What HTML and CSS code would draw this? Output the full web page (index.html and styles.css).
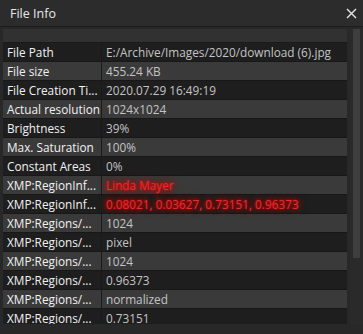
FILE: index.html
```html
<!DOCTYPE html>
<html lang="en">
<head>
    <meta charset="UTF-8">
    <title>File Info</title>
    <link rel="stylesheet" href="styles.css">
</head>
<body>
    <div class="window">
        <div class="titlebar">
            <span class="title">File Info</span>
            <svg class="close" width="11" height="11" viewBox="0 0 11 11">
                <path d="M1 1L10 10M10 1L1 10" stroke="#e6e6e6" stroke-width="1.4"/>
            </svg>
        </div>
        <div class="content">
            <div class="table">
                <div class="head"></div>
                <div class="row"><div class="key">File Path</div><div class="val">E:/Archive/Images/2020/download (6).jpg</div></div>
                <div class="row"><div class="key">File size</div><div class="val">455.24 KB</div></div>
                <div class="row"><div class="key">File Creation Ti...</div><div class="val">2020.07.29 16:49:19</div></div>
                <div class="row"><div class="key">Actual resolution</div><div class="val">1024x1024</div></div>
                <div class="row"><div class="key">Brightness</div><div class="val">39%</div></div>
                <div class="row"><div class="key">Max. Saturation</div><div class="val">100%</div></div>
                <div class="row"><div class="key">Constant Areas</div><div class="val">0%</div></div>
                <div class="row"><div class="key">XMP:RegionInf...</div><div class="val alert">Linda Mayer</div></div>
                <div class="row"><div class="key">XMP:RegionInf...</div><div class="val alert">0.08021, 0.03627, 0.73151, 0.96373</div></div>
                <div class="row"><div class="key">XMP:Regions/...</div><div class="val">1024</div></div>
                <div class="row"><div class="key">XMP:Regions/...</div><div class="val">pixel</div></div>
                <div class="row"><div class="key">XMP:Regions/...</div><div class="val">1024</div></div>
                <div class="row"><div class="key">XMP:Regions/...</div><div class="val">0.96373</div></div>
                <div class="row"><div class="key">XMP:Regions/...</div><div class="val">normalized</div></div>
                <div class="row"><div class="key">XMP:Regions/...</div><div class="val">0.73151</div></div>
            </div>
            <div class="scrollbar"><div class="thumb"></div></div>
        </div>
    </div>
</body>
</html>
```

FILE: styles.css
```css
body {
    margin: 0;
    background-color: #282828;
    font-family: "Open Sans", "Noto Sans", sans-serif;
    font-size: 11.8px;
}

.window {
    width: 363px;
    height: 334px;
    display: flex;
    flex-direction: column;
    overflow: hidden;
}

.titlebar {
    height: 26px;
    flex-shrink: 0;
    background-color: #2c2c2c;
    border-bottom: 1px solid #1c1c1c;
    display: flex;
    align-items: center;
    justify-content: space-between;
    padding: 0 6px 0 10px;
}

.title {
    color: #e8e8e8;
    font-size: 12.5px;
}

.content {
    display: flex;
    gap: 3px;
    padding: 2px 0 0 3px;
    height: 295px;
    flex-shrink: 0;
}

.table {
    width: 344px;
    overflow: hidden;
    background-color: #1e1e1e;
}

.head {
    height: 13px;
    background-color: #313131;
    border-bottom: 1px solid #1a1a1a;
}

.row {
    display: flex;
    height: 18px;
    border-bottom: 1px solid #181818;
    background-color: #1e1e1e;
    line-height: 19px;
}

.row:nth-child(odd) {
    background-color: #3a3a3a;
}

.key {
    width: 99px;
    flex-shrink: 0;
    padding-left: 4px;
    box-sizing: border-box;
    color: #f2f2f2;
    border-right: 1px solid #1a1a1a;
    white-space: nowrap;
    overflow: hidden;
}

.val {
    padding-left: 4px;
    color: #c4c4c4;
    white-space: nowrap;
}

.val.alert {
    color: #e03030;
    text-shadow: 0 0 3px #ff0000, 0 0 6px #c00000, 0 0 8px #a00000;
}

.scrollbar {
    width: 13px;
    background-color: #2a2a2a;
    padding: 0 3px;
    box-sizing: border-box;
}

.thumb {
    height: 229px;
    background-color: #3e3e3e;
}
```
